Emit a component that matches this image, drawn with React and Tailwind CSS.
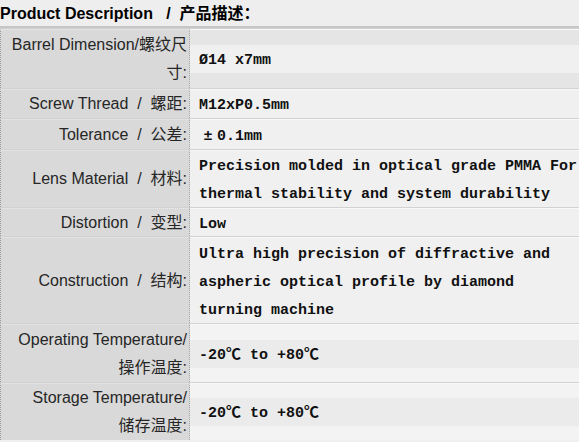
import React from "react";

function Row({ h, label, children, cellBg = "bg-[#f0f0f0]", lineBg = "" }) {
  return (
    <div className={`flex ${h} border-t border-[#d2d2d2]`}>
      <div className="w-[190px] shrink-0 bg-[#d9d9d9] border-l border-r border-dotted border-l-[#9a9a9a] border-r-[#a8a8a8] border-t border-t-[#ebebeb] flex items-center justify-end pr-[2px] text-right text-[16px] leading-[28px] text-[#262626] font-['Liberation_Sans','Noto_Sans_CJK_SC',sans-serif] whitespace-pre">
        <div>{label}</div>
      </div>
      <div className={`flex-1 ${cellBg} border-t border-t-[#f8f8f8] flex items-center`}>
        <div className={`w-full pl-[9px] ${lineBg} text-[15px] leading-[28px] font-bold text-[#111] font-['Liberation_Mono','Noto_Sans_CJK_SC',monospace] whitespace-pre-wrap`}>
          <div className="translate-y-[2px]">{children}</div>
        </div>
      </div>
    </div>
  );
}

export default function App() {
  return (
    <div className="w-[579px] h-[442px] overflow-hidden bg-[#f0f0f0]">
      <div className="h-[28px] bg-[#eeeeee] border-b-2 border-[#c6c6c6] text-[16px] leading-[28px] font-bold text-black font-['Liberation_Sans','Noto_Sans_CJK_SC',sans-serif] whitespace-pre">
        {"Product Description   /  产品描述："}
      </div>
      <Row h="h-[60px]" label={<>Barrel Dimension/螺纹尺<br />寸:</>} cellBg="bg-[#e5e5e5]" lineBg="bg-[#f0f0f0]">
        {"Ø14 x7mm"}
      </Row>
      <Row h="h-[30px]" label={<>{"Screw Thread  /  螺距:"}</>}>
        {"M12xP0.5mm"}
      </Row>
      <Row h="h-[31px]" label={<>{"Tolerance  /  公差:"}</>}>
        <span className="inline-block w-[18px] text-center">±</span>
        {"0.1mm"}
      </Row>
      <Row h="h-[58px]" label={<>{"Lens Material  /  材料:"}</>}>
        {"Precision molded in optical grade PMMA For\nthermal stability and system durability"}
      </Row>
      <Row h="h-[29px]" label={<>{"Distortion  /  变型:"}</>}>
        {"Low"}
      </Row>
      <Row h="h-[87px]" label={<>{"Construction  /  结构:"}</>}>
        {"Ultra high precision of diffractive and\naspheric optical profile by diamond\nturning machine"}
      </Row>
      <Row h="h-[59px]" label={<>Operating Temperature/<br />操作温度:</>} cellBg="bg-[#f3f3f3]" lineBg="bg-[#ebebeb]">
        {"-20℃ to +80℃"}
      </Row>
      <Row h="h-[58px]" label={<>Storage Temperature/<br />储存温度:</>} cellBg="bg-[#f3f3f3]" lineBg="bg-[#ebebeb]">
        {"-20℃ to +80℃"}
      </Row>
    </div>
  );
}
